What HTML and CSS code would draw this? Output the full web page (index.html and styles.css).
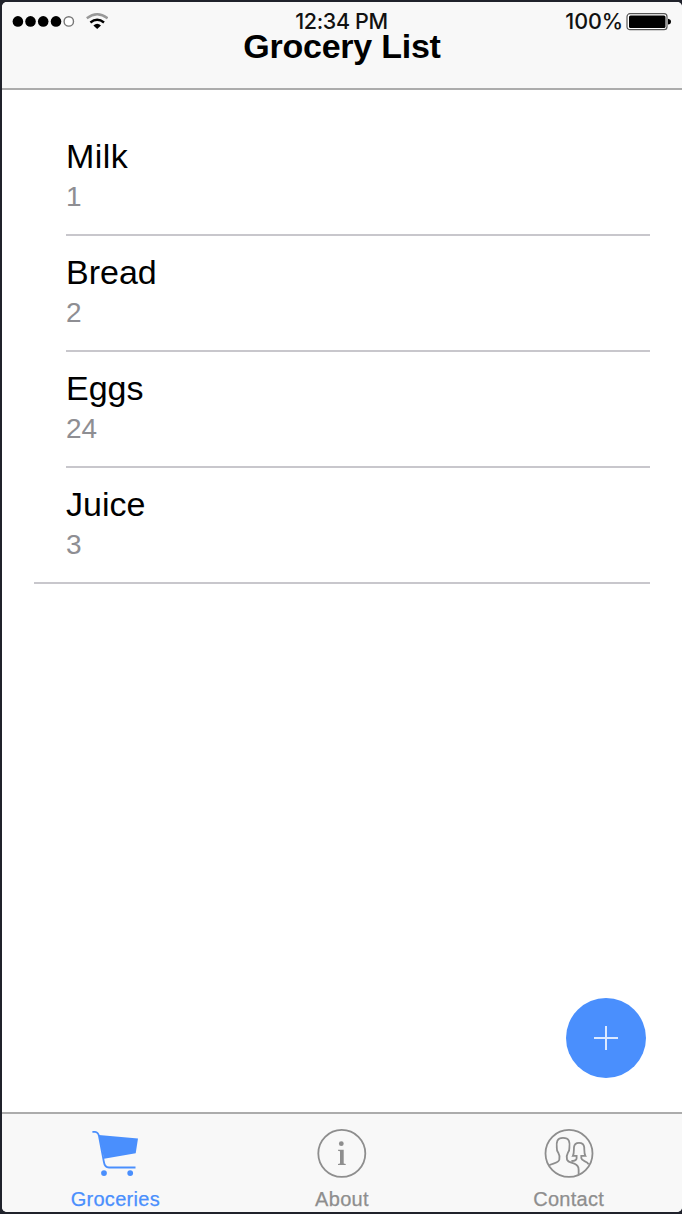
FILE: index.html
```html
<!DOCTYPE html>
<html lang="en">
<head>
<meta charset="utf-8">
<title>Grocery List</title>
<link rel="stylesheet" href="styles.css">
</head>
<body>
<div class="phone">
  <header class="header">
    <div class="status">
      <svg class="signal" width="106" height="26" viewBox="0 0 106 26">
        <circle cx="15.9" cy="11.4" r="5.3"/><circle cx="28.5" cy="11.4" r="5.3"/><circle cx="41.2" cy="11.4" r="5.3"/><circle cx="54" cy="11.4" r="5.3"/>
        <circle class="ring" cx="66.8" cy="11.4" r="4.7"/>
        <path class="wifi-weak" d="M84.8 8.2Q95.2 .3 105.6 8.2"/>
        <path class="wifi-mid" d="M88.4 12.5Q95.2 6.9 102 12.5"/>
        <path d="M91.4 15.4Q95.2 12 99 15.4L95.2 18.9Z"/>
      </svg>
      <span class="time">12:34 PM</span>
      <div class="power">
        <span class="percent">100%</span>
        <svg class="battery" width="46" height="20" viewBox="0 0 46 20">
          <rect class="case" x="1" y="1.7" width="40" height="16" rx="3"/>
          <rect x="3" y="3.5" width="36.5" height="12.4" rx="1.5"/>
          <path d="M42 6.8Q45 7.4 45 9.7T42 12.6Z"/>
        </svg>
      </div>
    </div>
    <h1 class="title">Grocery List</h1>
  </header>
  <main class="content">
    <ul class="list">
      <li class="item"><div class="name milk">Milk</div><div class="count">1</div></li>
      <li class="item"><div class="name">Bread</div><div class="count">2</div></li>
      <li class="item"><div class="name">Eggs</div><div class="count">24</div></li>
      <li class="item"><div class="name">Juice</div><div class="count">3</div></li>
    </ul>
    <button class="add" aria-label="Add item">
      <svg width="24" height="24" viewBox="0 0 24 24"><path d="M0 12H24M12 0V24"/></svg>
    </button>
  </main>
  <nav class="tabs">
    <a class="tab active">
      <svg class="icon" width="56" height="52" viewBox="0 0 56 52">
        <path class="solid" d="M11.8 7.9L51 11.5L48.7 26.2L17 31.8Z"/>
        <path class="line" d="M5.4 4.8H8Q11.2 5.2 12 9L16.8 34.5Q17.7 40.5 22 40.5H48.5"/>
        <circle class="solid" cx="17" cy="46.1" r="2.9"/><circle class="solid" cx="43.2" cy="46.1" r="2.9"/>
      </svg>
      <span class="label">Groceries</span>
    </a>
    <a class="tab">
      <svg class="icon" width="56" height="52" viewBox="0 0 56 52">
        <circle class="line" cx="27.8" cy="26.4" r="23.5"/>
        <circle class="solid" cx="27.3" cy="16.7" r="2.4"/>
        <path class="solid" d="M24 22.7H29.7V36.6L31.7 37V38H24V37L26 36.6V24.2L24 23.8Z"/>
      </svg>
      <span class="label">About</span>
    </a>
    <a class="tab">
      <svg class="icon" width="56" height="52" viewBox="0 0 56 52">
        <circle class="line" cx="28" cy="26.4" r="23.5"/>
        <path class="line" d="M8.2 38.4C11 36.2 17 36.5 18.3 32.8C18.8 30 18.6 27.8 17.3 25.8C15.8 24.2 15.7 22.8 15.8 20.8C15.2 14.8 16 10.9 22 10.9C28.3 10.9 29.1 15 28.4 20.8C28.5 22.8 28 24.4 26.9 25.8C25.4 28.3 25.5 30.5 26 32.6C27.5 36.8 36 35 37.4 40.7C37.9 43 37.7 45.5 37.6 47.7"/>
        <path class="line" d="M30.4 34C33 33.9 35.6 33.2 35.6 31.2V28.9H31.9C33.2 26.5 32.8 22.5 33 20.2C33.3 17 35 15.8 38 15.8S42.9 17 43.2 20.2C43.4 22.5 43 26.5 44.4 28.9H40.3V31.2C40.6 34.5 46 33.5 47.7 37.4"/>
      </svg>
      <span class="label">Contact</span>
    </a>
  </nav>
</div>
</body>
</html>
```
FILE: styles.css
```css
* { box-sizing: border-box; }
body {
  margin: 0;
  height: 1214px;
  padding: 2px 0 2px 2px;
  background: #20222b;
  font-family: "Liberation Sans", Arial, sans-serif;
  overflow: hidden;
}
.phone {
  height: 1210px;
  display: flex;
  flex-direction: column;
  background: #fff;
  border-radius: 5px;
  overflow: hidden;
}
.header {
  height: 88px;
  background: #f8f8f8;
  border-bottom: 2px solid #acacac;
}
.status {
  height: 26px;
  padding: 8px 10px 0 0;
  display: grid;
  grid-template-columns: 1fr auto 1fr;
  font: 500 21.5px/22px Inter, sans-serif;
  color: #111;
}
.ring { fill: #fff; stroke: #777; stroke-width: 1.4; }
.wifi-weak, .wifi-mid { fill: none; stroke-width: 2.4; }
.wifi-weak { stroke: #999; }
.wifi-mid { stroke: #000; }
.time { padding-left: 9px; letter-spacing: -0.35px; line-height: 18px; padding-top: 2px; height: 18px; white-space: nowrap; }
.power { display: flex; justify-content: flex-end; gap: 3px; }
.percent { letter-spacing: -0.1px; }
.battery { margin-top: 2px; }
.case { fill: #fff; stroke: #555; stroke-width: 1.2; }
.title {
  margin: 0;
  font-size: 34px;
  line-height: 36px;
  letter-spacing: -0.25px;
  font-weight: 700;
  text-align: center;
}
.content { flex: 1; position: relative; padding: 30px 32px; }
.list { margin: 0; padding: 0; list-style: none; }
.item {
  height: 116px;
  margin-left: 32px;
  padding-top: 16px;
  border-bottom: 2px solid #c8c7cc;
}
.item:last-child { margin-left: 0; padding-left: 32px; }
.name { font-size: 34px; line-height: 40px; color: #000; }
.milk { letter-spacing: 0.4px; }
.count { margin-top: 3px; font-size: 28px; line-height: 36px; color: #8e8e93; }
.add {
  position: absolute;
  right: 36px;
  bottom: 34px;
  width: 80px;
  height: 80px;
  padding: 0;
  display: flex;
  align-items: center;
  justify-content: center;
  border: 0;
  border-radius: 50%;
  background: #4a8ffd;
}
.add path { stroke: #dce9ff; stroke-width: 2; }
.tabs {
  height: 100px;
  display: grid;
  grid-template-columns: repeat(3, 1fr);
  background: #f8f8f8;
  border-top: 2px solid #acacac;
}
.tab {
  padding-top: 13px;
  display: flex;
  flex-direction: column;
  align-items: center;
  color: #8e8e8e;
}
.active { color: #4a8ffd; }
.icon { display: block; flex: none; }
.solid { fill: currentColor; }
.line { fill: none; stroke: currentColor; stroke-width: 1.8; }
.label {
  margin-top: 8px;
  font-size: 20px;
  line-height: 24px;
  letter-spacing: 0.3px;
  -webkit-text-stroke: 0.25px currentColor;
}
```
